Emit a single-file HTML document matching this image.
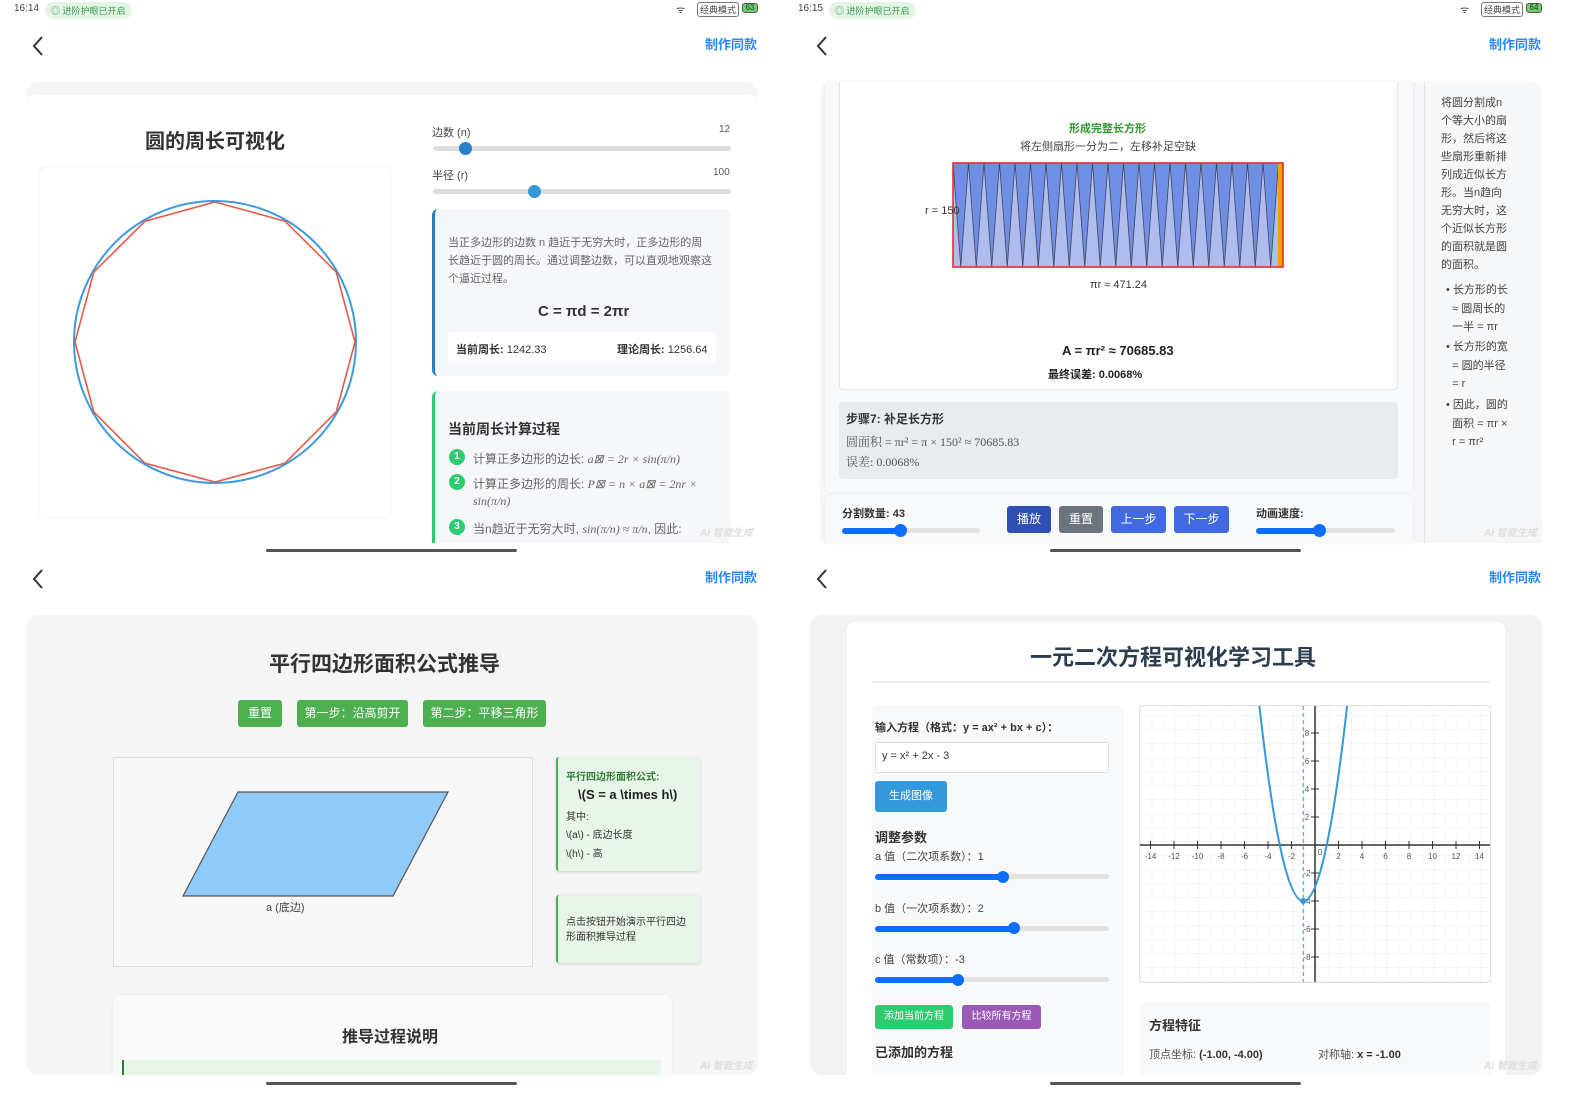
<!DOCTYPE html>
<html><head><meta charset="utf-8"><style>
*{margin:0;padding:0;box-sizing:border-box}
body{width:1588px;height:1107px;background:#fff;position:relative;overflow:hidden;font-family:"Liberation Sans","Noto Sans CJK SC",sans-serif;color:#333}
.a{position:absolute;white-space:nowrap}
.st{font-size:10px;color:#444}
.pill{background:#e3f6e6;color:#3d9a4f;border-radius:9px;font-size:9px;padding:2px 6px}
.mk{color:#2f86f6;font-size:13px;font-weight:bold}
.bar{position:absolute;height:3px;background:#555;border-radius:2px;width:251px}
.track{position:absolute;height:5px;background:#ddd;border-radius:3px}
.fill{position:absolute;height:6px;background:#0d6efd;border-radius:3px}
.thumb{position:absolute;width:13px;height:13px;border-radius:50%;background:#2a7fc9}
.btn{position:absolute;color:#fff;font-size:12px;text-align:center;border-radius:3px}
.num{position:absolute;width:16px;height:16px;border-radius:50%;background:#2ecc71;color:#fff;font-size:10px;text-align:center;line-height:16px;font-weight:bold}
.wm{color:#ddd;font-size:10px;font-weight:bold;font-style:italic}
</style></head><body>

<!-- status bars -->
<div class="a st" style="left:14px;top:3px">16:14</div>
<div class="a pill" style="left:45px;top:2px">◎ 进阶护眼已开启</div>
<div class="a st" style="left:676px;top:2px">ᯤ</div>
<div class="a st" style="left:697px;top:2px;border:1px solid #777;border-radius:3px;padding:0 2px;font-size:9px">经典模式</div>
<div class="a" style="left:742px;top:3px;width:16px;height:10px;border:1px solid #555;border-radius:3px;font-size:8px;background:#6ad26a;text-align:center;line-height:8px">63</div>
<div class="a st" style="left:1572px;top:2px"></div>
<div class="a st" style="left:798px;top:3px">16:15</div>
<div class="a pill" style="left:829px;top:2px">◎ 进阶护眼已开启</div>
<div class="a st" style="left:1460px;top:2px">ᯤ</div>
<div class="a st" style="left:1481px;top:2px;border:1px solid #777;border-radius:3px;padding:0 2px;font-size:9px">经典模式</div>
<div class="a" style="left:1526px;top:3px;width:16px;height:10px;border:1px solid #555;border-radius:3px;font-size:8px;background:#6ad26a;text-align:center;line-height:8px">64</div>

<!-- back chevrons & make same -->
<svg class="a" style="left:30px;top:35px" width="16" height="22"><path d="M12 2 L4 11 L12 20" fill="none" stroke="#333" stroke-width="2"/></svg>
<svg class="a" style="left:814px;top:35px" width="16" height="22"><path d="M12 2 L4 11 L12 20" fill="none" stroke="#333" stroke-width="2"/></svg>
<svg class="a" style="left:30px;top:568px" width="16" height="22"><path d="M12 2 L4 11 L12 20" fill="none" stroke="#333" stroke-width="2"/></svg>
<svg class="a" style="left:814px;top:568px" width="16" height="22"><path d="M12 2 L4 11 L12 20" fill="none" stroke="#333" stroke-width="2"/></svg>
<div class="a mk" style="left:705px;top:34px">制作同款</div>
<div class="a mk" style="left:1489px;top:34px">制作同款</div>
<div class="a mk" style="left:705px;top:567px">制作同款</div>
<div class="a mk" style="left:1489px;top:567px">制作同款</div>

<!-- ===== Q1 ===== -->
<div class="a" style="left:26px;top:82px;width:732px;height:461px;background:#f5f6f8;border-radius:12px 12px 0 0"></div>
<div class="a" style="left:26px;top:95px;width:732px;height:448px;background:#fff;border-radius:10px 10px 0 0"></div>
<div class="a" style="left:145px;top:125px;font-size:20px;font-weight:bold;color:#333">圆的周长可视化</div>
<div class="a" style="left:40px;top:168px;width:350px;height:349px;background:#fff;border-radius:6px;box-shadow:0 0 4px rgba(0,0,0,.08)"></div>
<svg class="a" style="left:0;top:0" width="400" height="520">
<circle cx="215" cy="342" r="141" fill="none" stroke="#3b9ae0" stroke-width="2"/>
<polygon points="215,202 285,221.2 336.2,272 355,342 336.2,412 285,463.2 215,482 145,463.2 93.8,412 75,342 93.8,272 145,221.2" fill="none" stroke="#e35a4a" stroke-width="1.6"/>
</svg>
<div class="a" style="left:432px;top:124px;font-size:11px;color:#444">边数 (n)</div>
<div class="a" style="left:719px;top:124px;font-size:10px;color:#555">12</div>
<div class="track" style="left:433px;top:146px;width:298px"></div>
<div class="thumb" style="left:459px;top:142px;background:#2a7fc9"></div>
<div class="a" style="left:432px;top:167px;font-size:11px;color:#444">半径 (r)</div>
<div class="a" style="left:713px;top:167px;font-size:10px;color:#555">100</div>
<div class="track" style="left:433px;top:189px;width:298px"></div>
<div class="thumb" style="left:528px;top:185px;background:#3498db"></div>

<div class="a" style="left:432px;top:209px;width:298px;height:167px;background:#f5f7fa;border-left:3px solid #2a7fc9;border-radius:6px"></div>
<div class="a" style="left:448px;top:234px;font-size:11px;color:#666;line-height:18px;white-space:normal;width:265px">当正多边形的边数 n 趋近于无穷大时，正多边形的周长趋近于圆的周长。通过调整边数，可以直观地观察这个逼近过程。</div>
<div class="a" style="left:538px;top:303px;font-size:15px;font-weight:bold;color:#333">C = πd = 2πr</div>
<div class="a" style="left:448px;top:332px;width:268px;height:31px;background:#fff;border-radius:4px"></div>
<div class="a" style="left:456px;top:341px;font-size:11px;color:#333"><b>当前周长:</b> 1242.33</div>
<div class="a" style="left:617px;top:341px;font-size:11px;color:#333"><b>理论周长:</b> 1256.64</div>

<div class="a" style="left:432px;top:391px;width:298px;height:152px;background:#f5f7fa;border-left:3px solid #2ecc71;border-radius:6px 6px 0 0"></div>
<div class="a" style="left:448px;top:419px;font-size:14px;font-weight:bold;color:#333">当前周长计算过程</div>
<div class="num" style="left:449px;top:449px">1</div>
<div class="num" style="left:449px;top:474px">2</div>
<div class="num" style="left:449px;top:519px">3</div>
<div class="a" style="left:473px;top:450px;font-size:12px;color:#666">计算正多边形的边长: <i style="font-family:'Liberation Serif',serif">a⊠ = 2r × sin(π/n)</i></div>
<div class="a" style="left:473px;top:475px;font-size:12px;color:#666">计算正多边形的周长: <i style="font-family:'Liberation Serif',serif">P⊠ = n × a⊠ = 2nr ×</i></div>
<div class="a" style="left:473px;top:494px;font-size:12px;color:#666;font-family:'Liberation Serif',serif"><i>sin(π/n)</i></div>
<div class="a" style="left:473px;top:520px;font-size:12px;color:#666">当n趋近于无穷大时, <i style="font-family:'Liberation Serif',serif">sin(π/n) ≈ π/n</i>, 因此:</div>
<div class="a wm" style="left:700px;top:524px">Ai 智能生成</div>

<!-- ===== Q2 ===== -->
<div class="a" style="left:820px;top:82px;width:722px;height:461px;background:#f6f7f9;border-radius:12px 12px 0 0"></div>
<div class="a" style="left:825px;top:82px;width:588px;height:410px;background:#f8f9fa;border-radius:0 0 6px 6px;box-shadow:0 0 3px rgba(0,0,0,.08)"></div>
<div class="a" style="left:839px;top:82px;width:559px;height:308px;background:#fff;border:1px solid #e6e6e6;border-top:none;border-radius:0 0 4px 4px"></div>
<div class="a" style="left:1069px;top:120px;font-size:11px;font-weight:bold;color:#2e9a2e">形成完整长方形</div>
<div class="a" style="left:1020px;top:138px;font-size:11px;color:#444">将左侧扇形一分为二，左移补足空缺</div>
<svg class="a" style="left:950px;top:160px" width="340" height="112">
<defs><pattern id="tri" x="3" y="3" width="15.5" height="104" patternUnits="userSpaceOnUse">
<rect width="15.5" height="104" fill="#aebdee"/>
<polygon points="0,0 15.5,0 7.75,104" fill="#6f8fe6" stroke="#445" stroke-width="0.8"/>
</pattern></defs>
<rect x="3" y="3" width="326" height="104" fill="url(#tri)"/>
<rect x="328" y="3" width="5" height="104" fill="#f5a000"/>
<rect x="3" y="3" width="330" height="104" fill="none" stroke="#e03030" stroke-width="1.6"/>
</svg>
<div class="a" style="left:925px;top:205px;font-size:11px;color:#333">r = 150</div>
<div class="a" style="left:1090px;top:279px;font-size:11px;color:#333">πr ≈ 471.24</div>
<div class="a" style="left:1062px;top:343px;font-size:13px;font-weight:bold;color:#222">A = πr² ≈ 70685.83</div>
<div class="a" style="left:1048px;top:366px;font-size:11px;font-weight:bold;color:#222">最终误差: 0.0068%</div>
<div class="a" style="left:839px;top:402px;width:559px;height:77px;background:#e9ecef;border-radius:3px"></div>
<div class="a" style="left:846px;top:410px;font-size:12px;font-weight:bold;color:#333">步骤7: 补足长方形</div>
<div class="a" style="left:846px;top:433px;font-size:12px;color:#555;font-family:'Liberation Serif','Noto Serif CJK SC',serif">圆面积 = πr² = π × 150² ≈ 70685.83</div>
<div class="a" style="left:846px;top:453px;font-size:12px;color:#555;font-family:'Liberation Serif','Noto Serif CJK SC',serif">误差: 0.0068%</div>
<div class="a" style="left:1424px;top:82px;width:1px;height:461px;background:#e5e5e5"></div>
<div class="a" style="left:1441px;top:94px;font-size:11px;color:#444;line-height:18px;white-space:normal;width:72px">将圆分割成n个等大小的扇形，然后将这些扇形重新排列成近似长方形。当n趋向无穷大时，这个近似长方形的面积就是圆的面积。</div>
<div class="a" style="left:1446px;top:281px;font-size:11px;color:#444;line-height:18.5px;white-space:normal;width:70px">• 长方形的长<br>&nbsp;&nbsp;≈ 圆周长的<br>&nbsp;&nbsp;一半 = πr</div>
<div class="a" style="left:1446px;top:338px;font-size:11px;color:#444;line-height:18.5px;white-space:normal;width:70px">• 长方形的宽<br>&nbsp;&nbsp;= 圆的半径<br>&nbsp;&nbsp;= r</div>
<div class="a" style="left:1446px;top:396px;font-size:11px;color:#444;line-height:18.5px;white-space:normal;width:70px">• 因此，圆的<br>&nbsp;&nbsp;面积 = πr ×<br>&nbsp;&nbsp;r = πr²</div>
<div class="a" style="left:825px;top:495px;width:588px;height:48px;background:#f8f9fa;border-radius:6px 6px 0 0;box-shadow:0 0 3px rgba(0,0,0,.06)"></div>
<div class="a" style="left:842px;top:505px;font-size:11px;font-weight:bold;color:#333">分割数量: 43</div>
<div class="track" style="left:842px;top:528px;width:138px;background:#e2e2e2"></div>
<div class="fill" style="left:842px;top:528px;width:58px"></div>
<div class="thumb" style="left:894px;top:524px;background:#0d6efd"></div>
<div class="btn" style="left:1007px;top:506px;width:44px;height:27px;line-height:27px;background:#2f4fb5">播放</div>
<div class="btn" style="left:1059px;top:506px;width:44px;height:27px;line-height:27px;background:#6c757d">重置</div>
<div class="btn" style="left:1111px;top:506px;width:55px;height:27px;line-height:27px;background:#4169e1">上一步</div>
<div class="btn" style="left:1174px;top:506px;width:55px;height:27px;line-height:27px;background:#4169e1">下一步</div>
<div class="a" style="left:1256px;top:505px;font-size:11px;font-weight:bold;color:#333">动画速度:</div>
<div class="track" style="left:1256px;top:528px;width:139px;background:#e2e2e2"></div>
<div class="fill" style="left:1256px;top:528px;width:63px"></div>
<div class="thumb" style="left:1313px;top:524px;background:#0d6efd"></div>
<div class="a wm" style="left:1484px;top:524px">Ai 智能生成</div>

<div class="bar" style="left:266px;top:549px"></div>
<div class="bar" style="left:1050px;top:549px"></div>

<!-- ===== Q3 ===== -->
<div class="a" style="left:26px;top:615px;width:732px;height:460px;background:#f5f5f5;border-radius:12px"></div>
<div class="a" style="left:269px;top:648px;font-size:21px;font-weight:bold;color:#333">平行四边形面积公式推导</div>
<div class="btn" style="left:238px;top:700px;width:44px;height:27px;line-height:27px;background:#4caf50">重置</div>
<div class="btn" style="left:297px;top:700px;width:111px;height:27px;line-height:27px;background:#4caf50">第一步：沿高剪开</div>
<div class="btn" style="left:423px;top:700px;width:123px;height:27px;line-height:27px;background:#4caf50">第二步：平移三角形</div>
<div class="a" style="left:113px;top:757px;width:420px;height:210px;background:#f7f7f7;border:1px solid #ddd"></div>
<svg class="a" style="left:0;top:750px" width="540" height="160"><polygon points="238,42 448,42 393,146 183,146" fill="#90caf9" stroke="#555" stroke-width="1.2"/></svg>
<div class="a" style="left:266px;top:899px;font-size:11px;color:#444">a (底边)</div>
<div class="a" style="left:556px;top:757px;width:144px;height:114px;background:#e8f5e9;border-left:2px solid #4caf50;border-radius:3px;box-shadow:0 1px 3px rgba(0,0,0,.15)"></div>
<div class="a" style="left:566px;top:768px;font-size:10px;font-weight:bold;color:#2e7d32">平行四边形面积公式:</div>
<div class="a" style="left:578px;top:787px;font-size:13px;font-weight:bold;color:#222">\(S = a \times h\)</div>
<div class="a" style="left:566px;top:808px;font-size:10px;color:#333">其中:</div>
<div class="a" style="left:566px;top:826px;font-size:10px;color:#333">\(a\) - 底边长度</div>
<div class="a" style="left:566px;top:845px;font-size:10px;color:#333">\(h\) - 高</div>
<div class="a" style="left:556px;top:895px;width:144px;height:68px;background:#e8f5e9;border-left:2px solid #4caf50;border-radius:3px;box-shadow:0 1px 3px rgba(0,0,0,.15)"></div>
<div class="a" style="left:566px;top:915px;font-size:10px;color:#333;line-height:15px;white-space:normal;width:125px">点击按钮开始演示平行四边形面积推导过程</div>
<div class="a" style="left:113px;top:995px;width:559px;height:80px;background:#f9f9f9;border-radius:6px 6px 0 0;box-shadow:0 0 3px rgba(0,0,0,.06)"></div>
<div class="a" style="left:342px;top:1023px;font-size:16px;font-weight:bold;color:#333">推导过程说明</div>
<div class="a" style="left:122px;top:1060px;width:539px;height:15px;background:#e8f5e9;border-left:2px solid #2e7d32"></div>
<div class="a wm" style="left:700px;top:1057px">Ai 智能生成</div>

<!-- ===== Q4 ===== -->
<div class="a" style="left:810px;top:615px;width:732px;height:460px;background:#f2f2f2;border-radius:12px"></div>
<div class="a" style="left:847px;top:622px;width:658px;height:453px;background:#fff;border-radius:8px 8px 0 0"></div>
<div class="a" style="left:1030px;top:640px;font-size:22px;font-weight:bold;color:#2c3e50">一元二次方程可视化学习工具</div>
<div class="a" style="left:872px;top:681px;width:618px;height:2px;background:#eee"></div>
<div class="a" style="left:872px;top:705px;width:252px;height:370px;background:#f8f9fa;border-radius:5px 5px 0 0"></div>
<div class="a" style="left:875px;top:719px;font-size:11px;font-weight:bold;color:#333">输入方程（格式：y = ax² + bx + c）：</div>
<div class="a" style="left:875px;top:742px;width:234px;height:31px;background:#fff;border:1px solid #ddd;border-radius:3px"></div>
<div class="a" style="left:882px;top:750px;font-size:11px;color:#333">y = x² + 2x - 3</div>
<div class="btn" style="left:875px;top:781px;width:72px;height:31px;line-height:31px;background:#3498db;font-size:11px">生成图像</div>
<div class="a" style="left:875px;top:827px;font-size:13px;font-weight:bold;color:#333">调整参数</div>
<div class="a" style="left:875px;top:848px;font-size:11px;color:#444">a 值（二次项系数）：1</div>
<div class="track" style="left:875px;top:874px;width:234px;background:#e2e2e2"></div>
<div class="fill" style="left:875px;top:874px;width:128px"></div>
<div class="thumb" style="left:997px;top:871px;width:12px;height:12px;background:#0d6efd"></div>
<div class="a" style="left:875px;top:900px;font-size:11px;color:#444">b 值（一次项系数）：2</div>
<div class="track" style="left:875px;top:926px;width:234px;background:#e2e2e2"></div>
<div class="fill" style="left:875px;top:926px;width:139px"></div>
<div class="thumb" style="left:1008px;top:922px;width:12px;height:12px;background:#0d6efd"></div>
<div class="a" style="left:875px;top:951px;font-size:11px;color:#444">c 值（常数项）：-3</div>
<div class="track" style="left:875px;top:977px;width:234px;background:#e2e2e2"></div>
<div class="fill" style="left:875px;top:977px;width:83px"></div>
<div class="thumb" style="left:952px;top:974px;width:12px;height:12px;background:#0d6efd"></div>
<div class="btn" style="left:875px;top:1005px;width:78px;height:24px;line-height:24px;background:#2ecc71;font-size:10px">添加当前方程</div>
<div class="btn" style="left:962px;top:1005px;width:79px;height:24px;line-height:24px;background:#9b59b6;font-size:10px">比较所有方程</div>
<div class="a" style="left:875px;top:1042px;font-size:13px;font-weight:bold;color:#333">已添加的方程</div>

<svg class="a" style="left:1139px;top:705px;border:1px solid #ddd;border-radius:4px;background:#fff" width="352" height="278">
<defs><pattern id="g" x="0.5" y="-4" width="11.75" height="14" patternUnits="userSpaceOnUse"><path d="M11.75 0 V14 M0 14 H11.75" stroke="#ececec" stroke-width="1" fill="none"/></pattern></defs>
<rect width="352" height="278" fill="url(#g)"/>
<line x1="0" y1="139" x2="352" y2="139" stroke="#333" stroke-width="1.5"/>
<line x1="175" y1="0" x2="175" y2="278" stroke="#333" stroke-width="1.5"/>
<g stroke="#333" stroke-width="1">
<path d="M10.5 135v8M34 135v8M57.5 135v8M81 135v8M104.5 135v8M128 135v8M151.5 135v8M198.5 135v8M222 135v8M245.5 135v8M269 135v8M292.5 135v8M316 135v8M339.5 135v8"/>
<path d="M171 27h8M171 55h8M171 83h8M171 111h8M171 167h8M171 195h8M171 223h8M171 251h8"/>
</g>
<g font-size="8" fill="#555" font-family="Liberation Sans" text-anchor="middle">
<text x="10.5" y="153">-14</text><text x="34" y="153">-12</text><text x="57.5" y="153">-10</text><text x="81" y="153">-8</text><text x="104.5" y="153">-6</text><text x="128" y="153">-4</text><text x="151.5" y="153">-2</text><text x="180" y="149">0</text><text x="198.5" y="153">2</text><text x="222" y="153">4</text><text x="245.5" y="153">6</text><text x="269" y="153">8</text><text x="292.5" y="153">10</text><text x="316" y="153">12</text><text x="339.5" y="153">14</text>
<text x="167" y="30">8</text><text x="167" y="58">6</text><text x="167" y="86">4</text><text x="167" y="114">2</text><text x="167" y="170">-2</text><text x="167" y="198">-4</text><text x="167" y="226">-6</text><text x="167" y="254">-8</text>
</g>
<line x1="163.25" y1="0" x2="163.25" y2="278" stroke="#3498db" stroke-width="1" stroke-dasharray="4,3"/>
<path d="M119.4 0 Q163.25 390 207.1 0" fill="none" stroke="#3498db" stroke-width="2"/>
<circle cx="163.25" cy="195" r="3" fill="#3498db"/>
</svg>

<div class="a" style="left:1139px;top:1002px;width:352px;height:73px;background:#f8f9fa;border-radius:5px 5px 0 0"></div>
<div class="a" style="left:1149px;top:1015px;font-size:13px;font-weight:bold;color:#333">方程特征</div>
<div class="a" style="left:1149px;top:1046px;font-size:11px;color:#555">顶点坐标: <b style="color:#333">(-1.00, -4.00)</b></div>
<div class="a" style="left:1318px;top:1046px;font-size:11px;color:#555">对称轴: <b style="color:#333">x = -1.00</b></div>
<div class="a wm" style="left:1484px;top:1057px">Ai 智能生成</div>

<div class="bar" style="left:266px;top:1082px"></div>
<div class="bar" style="left:1050px;top:1082px"></div>
</body></html>
